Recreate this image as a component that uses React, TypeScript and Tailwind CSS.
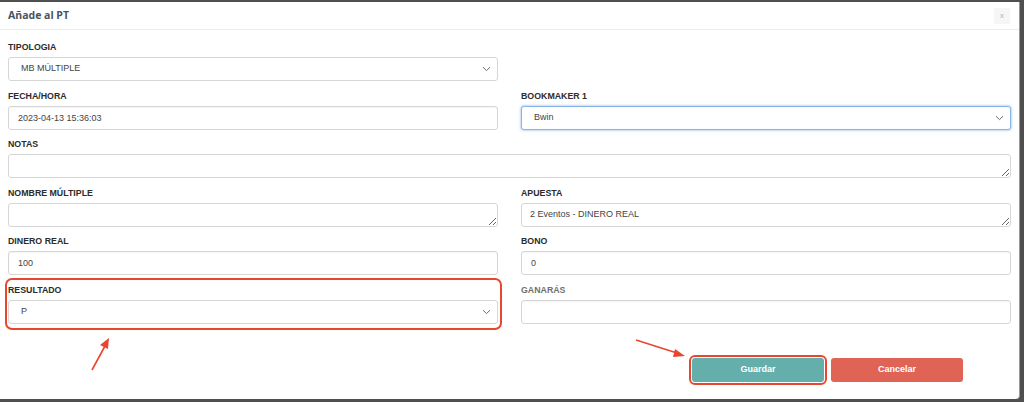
import React from "react";

const font = { fontFamily: '"Liberation Sans", Arial, sans-serif' };

function Chevron() {
  return (
    <svg
      className="absolute right-[7px] top-1/2 -translate-y-1/2 pointer-events-none"
      width="9"
      height="6"
      viewBox="0 0 9 6"
      fill="none"
    >
      <path d="M1 1.2L4.5 4.6L8 1.2" stroke="#6b6b6b" strokeWidth="1" />
    </svg>
  );
}

function Label({ children, muted }: { children: React.ReactNode; muted?: boolean }) {
  return (
    <label
      className={`block text-[8.8px] leading-[12px] font-bold mb-[4px] ${muted ? "text-[#707070]" : "text-[#2b2b2b]"}`}
    >
      {children}
    </label>
  );
}

function Select({ value, focused }: { value: string; focused?: boolean }) {
  return (
    <div className="relative h-[24px]">
      <select
        defaultValue={value}
        className={`block appearance-none w-full h-[24px] rounded-[3px] bg-white pl-[12px] text-[9px] text-[#444] outline-none border ${
          focused
            ? "border-[#8ab4e8] shadow-[0_0_2px_1px_rgba(120,170,230,0.45)]"
            : "border-[#d6d6d6]"
        }`}
        style={font}
      >
        <option>{value}</option>
      </select>
      <Chevron />
    </div>
  );
}

function Input({ value }: { value?: string }) {
  return (
    <input
      defaultValue={value}
      className="block w-full h-[24px] rounded-[3px] border border-[#d6d6d6] bg-white px-[9px] text-[9px] text-[#444] outline-none shadow-[inset_0_1px_1px_rgba(0,0,0,0.04)]"
      style={font}
    />
  );
}

function Area({ value }: { value?: string }) {
  return (
    <textarea
      defaultValue={value}
      rows={1}
      className="block w-full h-[24px] rounded-[3px] border border-[#d6d6d6] bg-white px-[8px] py-[5px] text-[9px] leading-[11px] text-[#444] outline-none"
      style={font}
    />
  );
}

export default function App() {
  return (
    <div className="w-[1024px] h-[402px] bg-[#4f4f4f] pt-[2px] overflow-hidden relative" style={font}>
      <div className="w-[1020px] h-[397px] bg-white rounded-br-[4px] border-r border-[#9a9a9a] relative">
        {/* header */}
        <div className="h-[28px] border-b border-[#ededed] flex items-center justify-between pl-[8px] pr-[9px]">
          <h1
            className="text-[10.5px] font-bold text-[#4a5262]"
            style={{ fontFamily: '"Open Sans", "Liberation Sans", sans-serif' }}
          >
            Añade al PT
          </h1>
          <button className="w-[16px] h-[16px] bg-[#f6f6f6] text-[#b5b5b5] text-[8px] leading-none flex items-center justify-center">
            x
          </button>
        </div>

        {/* body */}
        <div className="px-[8px] pt-[11px] grid grid-cols-2 gap-x-[23px] gap-y-[8.5px]">
          <div>
            <Label>TIPOLOGIA</Label>
            <Select value="MB MÚLTIPLE" />
          </div>
          <div />

          <div>
            <Label>FECHA/HORA</Label>
            <Input value="2023-04-13 15:36:03" />
          </div>
          <div>
            <Label>BOOKMAKER 1</Label>
            <Select value="Bwin" focused />
          </div>

          <div className="col-span-2">
            <Label>NOTAS</Label>
            <Area />
          </div>

          <div>
            <Label>NOMBRE MÚLTIPLE</Label>
            <Area />
          </div>
          <div>
            <Label>APUESTA</Label>
            <Area value="2 Eventos - DINERO REAL" />
          </div>

          <div>
            <Label>DINERO REAL</Label>
            <Input value="100" />
          </div>
          <div>
            <Label>BONO</Label>
            <Input value="0" />
          </div>

          <div className="relative">
            <Label>RESULTADO</Label>
            <Select value="P" />
            <div className="absolute -left-[3px] -right-[4px] -top-[6px] -bottom-[6px] border-2 border-[#e8462f] rounded-[7px] pointer-events-none" />
          </div>
          <div>
            <Label muted>GANARÁS</Label>
            <Input />
          </div>
        </div>

        {/* actions */}
        <div className="flex justify-end gap-[7px] pr-[56px] mt-[34px]">
          <button className="w-[132px] h-[24px] rounded-[3px] bg-[#64aeac] text-white text-[9px] font-bold outline-2 outline-offset-[1px] outline-[#e8462f]">
            Guardar
          </button>
          <button className="w-[132px] h-[24px] rounded-[3px] bg-[#e06456] text-white text-[9px] font-bold">
            Cancelar
          </button>
        </div>

        {/* annotation arrows */}
        <svg className="absolute left-0 top-0 pointer-events-none" width="1020" height="397">
          <line x1="92" y1="368" x2="105" y2="344" stroke="#e8462f" strokeWidth="1.6" />
          <polygon points="109,336 100,343 108,347" fill="#e8462f" />
          <line x1="636" y1="338" x2="677" y2="351" stroke="#e8462f" strokeWidth="1.6" />
          <polygon points="685,354 675,347 673,355" fill="#e8462f" />
        </svg>
      </div>
    </div>
  );
}
